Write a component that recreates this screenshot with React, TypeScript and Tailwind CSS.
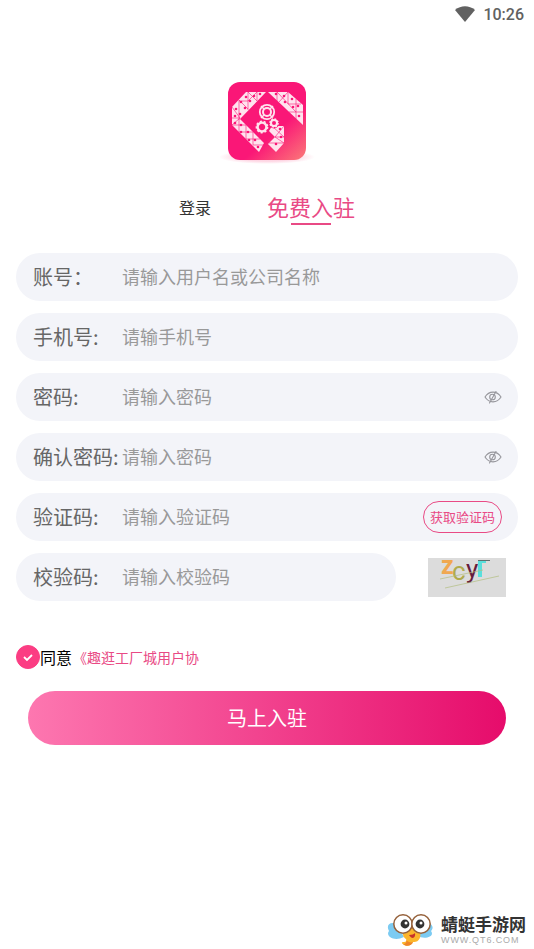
import { useState } from 'react';

interface FieldProps {
  id: string;
  label: string;
  placeholder: string;
  type?: string;
  className?: string;
  children?: React.ReactNode;
}

function Field({ id, label, placeholder, type = 'text', className = '', children }: FieldProps) {
  return (
    <div className={`flex h-12 items-center rounded-full bg-[#f3f4f9] px-4 ${className}`}>
      <label htmlFor={id} className="w-[90px] shrink-0 pl-px text-xl whitespace-nowrap text-[#666]">
        {label}
      </label>
      <input
        id={id}
        type={type}
        placeholder={placeholder}
        className="h-full min-w-0 flex-1 bg-transparent pb-0.5 text-lg text-[#555] outline-none placeholder:text-[#999]"
      />
      {children}
    </div>
  );
}

function EyeButton({ onClick, label }: { onClick: () => void; label: string }) {
  return (
    <button type="button" onClick={onClick} aria-label={label} className="shrink-0">
      <svg viewBox="0 0 18 16" className="h-4 w-[18px]" fill="none" stroke="#96969c" strokeWidth="1.1" strokeLinecap="round">
        <path d="M1 8c4-6.5 12-6.5 16 0-4 6.5-12 6.5-16 0Z" />
        <circle cx="8.5" cy="8" r="2.8" />
        <path d="M12 2.5 5.5 14" />
      </svg>
    </button>
  );
}

function Gear({ x, y, r, hole, teeth }: { x: number; y: number; r: number; hole: number; teeth: number }) {
  const step = (2 * Math.PI * r) / teeth;
  return (
    <g transform={`translate(${x} ${y})`} fill="none" stroke="#ffe3ee">
      <circle r={r} strokeWidth="1.6" strokeDasharray={`${step * 0.55} ${step * 0.45}`} />
      <circle r={(r + hole) / 2} strokeWidth={r - hole} />
    </g>
  );
}

// Centres of the holes in the truss triangles
const rivets = [
  [27, 17], [35, 16], [41, 14], [22, 22], [31, 21], [26, 28], [17, 29], [21, 34], [16, 36], [16, 43],
  [22, 45], [22, 52], [29, 52], [30, 60], [36, 60], [39, 67],
  [57, 14], [65, 16], [66, 22], [73, 19], [74, 27], [79, 26], [80, 36],
  [61, 49], [62, 57], [57, 64],
];

function Logo() {
  return (
    <svg viewBox="0 0 96 86" className="h-[86px] w-24" role="img" aria-label="趣逛工厂城">
      <defs>
        <linearGradient id="logoBg" x1="0.3" y1="0.2" x2="1" y2="1">
          <stop offset="0.5" stopColor="#fa1777" />
          <stop offset="1" stopColor="#fb7a78" />
        </linearGradient>
        <radialGradient id="logoShadow">
          <stop offset="0.6" stopColor="#fb5a90" stopOpacity="0.25" />
          <stop offset="1" stopColor="#fb5a90" stopOpacity="0" />
        </radialGradient>
      </defs>
      <ellipse cx="48" cy="77" rx="48" ry="7" fill="url(#logoShadow)" />
      <rect x="9" y="2" width="78" height="78" rx="12" fill="url(#logoBg)" />
      <g fill="#ffe3ee">
        <path d="M27 12h20L21 39l24 24-5 9-27-27V27Z" />
        <path d="M49 12h20l15 13v20Z" />
        <path d="M53 46h12v17l-8 9-8-8 7-7-6-6Z" />
      </g>
      <path
        d="M29 12v18M29 12l9 9M38 12v9M38 12 29 21H20M20 20l9 9M20 20v20M13 27l8 11M13 38h8M21 38l-8 7h14M20 52v-13M20 52h14M27 59V45M27 59h14M34 52v13h11M58 12v9M58 12l19 20M69 12v12h13M69 12l-9 10M77 19v20M84 32h-14M53 46l12 11M65 46l-9 11h9M56 57l9 6H50"
        fill="none"
        stroke="#fa1777"
        strokeWidth="0.6"
      />
      {rivets.map(([x, y]) => (
        <circle key={`${x}-${y}`} cx={x} cy={y} r="1.3" fill="#fa1777" />
      ))}
      <circle cx="48" cy="32" r="7.2" fill="none" stroke="#ffe3ee" strokeWidth="1.8" />
      <circle cx="48" cy="32" r="4" fill="none" stroke="#ffe3ee" strokeWidth="2" />
      <path d="m42 26 3 3M54 26l-3 3M42 38l3-3M54 38l-3-3" stroke="#ffe3ee" strokeWidth="1.5" />
      <Gear x={43} y={47} r={5.6} hole={3.2} teeth={9} />
      <circle cx="55" cy="43" r="5.4" fill="#fa1777" />
      <Gear x={55} y={43} r={4} hole={2} teeth={8} />
    </svg>
  );
}

function Captcha() {
  return (
    <svg viewBox="0 0 78 39" className="h-[39px] w-[78px] overflow-visible" role="img" aria-label="校验码" fontFamily="Roboto, sans-serif">
      <rect width="78" height="39" fill="#dcdcdc" />
      <text x="13" y="16" fontSize="25" fontWeight="700" fill="#f0a850">z</text>
      <text x="24" y="22" fontSize="26" fill="#b0aa4c">c</text>
      <text x="38" y="20" fontSize="26" fill="#651c3c">y</text>
      <path d="M52 2v17" stroke="#59dfdc" strokeWidth="4" />
      <path d="M52 4h6" stroke="#59dfdc" strokeWidth="2" />
      <path d="M50 2.5h12" stroke="#607070" />
      <path d="M12 21 55 12M17 30l54-12" stroke="#b2bd80" strokeWidth="0.7" />
    </svg>
  );
}

function Mascot() {
  return (
    <svg viewBox="0 0 46 34" className="h-[34px] w-[46px]" aria-hidden="true">
      <path d="M10 11C2 8-1 13 2 18c-4 5 5 11 15 6ZM37 11c7-3 11 3 7 7 4 5-5 9-14 5Z" fill="#7ccbf2" />
      <path d="M17 17c4-4 11-4 15 0 4 7-1 13-6 12-1 4-8 5-10 2-2-1-1-2 1-2 2 0 3-1 2-3-3-2-4-5-2-9Z" fill="#fbb52b" />
      <path d="M19 27c2 2 5 3 7 2-1 4-7 5-10 2 3 0 4-2 3-4Z" fill="#ee8429" />
      <circle cx="16" cy="11" r="9.2" fill="#fff" stroke="#95613b" strokeWidth="1.5" />
      <circle cx="34" cy="11" r="9.2" fill="#fff" stroke="#95613b" strokeWidth="1.5" />
      <circle cx="18" cy="11" r="4.4" fill="#333" />
      <circle cx="33" cy="11" r="4.4" fill="#333" />
      <circle cx="19" cy="10" r="1.5" fill="#fff" />
      <circle cx="34" cy="10" r="1.5" fill="#fff" />
      <path d="M22 22c3 0 5-1 6-2 1 5-3 7-6 2Z" fill="#c7322a" />
    </svg>
  );
}

export default function App() {
  const [showPassword, setShowPassword] = useState(false);
  const [showConfirm, setShowConfirm] = useState(false);
  const [agreed, setAgreed] = useState(true);

  return (
    <div className="flex min-h-screen flex-col bg-white font-['Noto_Sans_CJK_SC','Noto_Sans',sans-serif]">
      <header className="flex h-7 items-center justify-end gap-2 pr-2.5 text-[#616161]">
        <svg viewBox="0 0 20 16" className="h-4 w-5" fill="currentColor" aria-hidden="true">
          <path d="M0 4C6-1 14-1 20 4L10 16Z" />
        </svg>
        <span className="pt-px font-[Roboto,sans-serif] text-base font-medium">10:26</span>
      </header>

      <div className="mt-[52px] flex justify-center">
        <Logo />
      </div>

      <nav className="mt-5 flex h-10 items-center justify-center gap-14">
        <button type="button" className="pt-0.5 text-base text-[#333]">登录</button>
        <button type="button" className="relative text-[22px] text-[#e94a85]">
          免费入驻
          <span className="absolute -bottom-0.5 left-1/2 h-0.5 w-10 -translate-x-1/2 bg-[#e94a85]" />
        </button>
      </nav>

      <form className="mt-[27px] px-4" onSubmit={(e) => e.preventDefault()}>
        <div className="flex flex-col gap-3">
          <Field id="account" label="账号：" placeholder="请输入用户名或公司名称" />
          <Field id="phone" label="手机号:" placeholder="请输手机号" type="tel" />
          <Field id="password" label="密码:" placeholder="请输入密码" type={showPassword ? 'text' : 'password'}>
            <EyeButton onClick={() => setShowPassword(!showPassword)} label="显示密码" />
          </Field>
          <Field id="confirm" label="确认密码:" placeholder="请输入密码" type={showConfirm ? 'text' : 'password'}>
            <EyeButton onClick={() => setShowConfirm(!showConfirm)} label="显示确认密码" />
          </Field>
          <Field id="code" label="验证码:" placeholder="请输入验证码">
            <button type="button" className="h-8 shrink-0 rounded-full border border-[#e94a85] px-1.5 text-[13px] text-[#e94a85]">
              获取验证码
            </button>
          </Field>
          <div className="flex items-center justify-between pr-3">
            <Field id="check" label="校验码:" placeholder="请输入校验码" className="mr-8 flex-1" />
            <button type="button" aria-label="刷新校验码">
              <Captcha />
            </button>
          </div>
        </div>

        <div className="mt-11 flex h-6 items-center">
          <label className="flex items-center text-base text-black">
            <span className="relative flex h-6 w-6 items-center justify-center">
              <input
                type="checkbox"
                checked={agreed}
                onChange={(e) => setAgreed(e.target.checked)}
                className="peer h-6 w-6 appearance-none rounded-full border border-[#fb3d83] checked:bg-[#fb3d83]"
              />
              <svg viewBox="0 0 24 24" className="pointer-events-none absolute inset-0 hidden peer-checked:block" fill="none" stroke="#fff" strokeWidth="1.8">
                <path d="m8 12 3 3 5-5" />
              </svg>
            </span>
            同意
          </label>
          <a href="#agreement" className="pl-px text-sm text-[#e94a85]">《趣逛工厂城用户协</a>
        </div>

        <div className="mt-[22px] px-3">
          <button
            type="submit"
            className="h-[54px] w-full rounded-full bg-linear-to-r/srgb from-[#fd77b0] to-[#e60c6b] text-xl text-white"
          >
            马上入驻
          </button>
        </div>
      </form>

      <footer className="mt-auto flex items-center justify-end gap-2 pr-2 pb-0.5">
        <Mascot />
        <div className="flex flex-col">
          <span className="text-[17px] leading-5 font-bold text-[#333]">蜻蜓手游网</span>
          <span className="font-['Liberation_Sans',sans-serif] text-[9px] leading-3 tracking-widest text-[#aaa]">WWW.QT6.COM</span>
        </div>
      </footer>
    </div>
  );
}
